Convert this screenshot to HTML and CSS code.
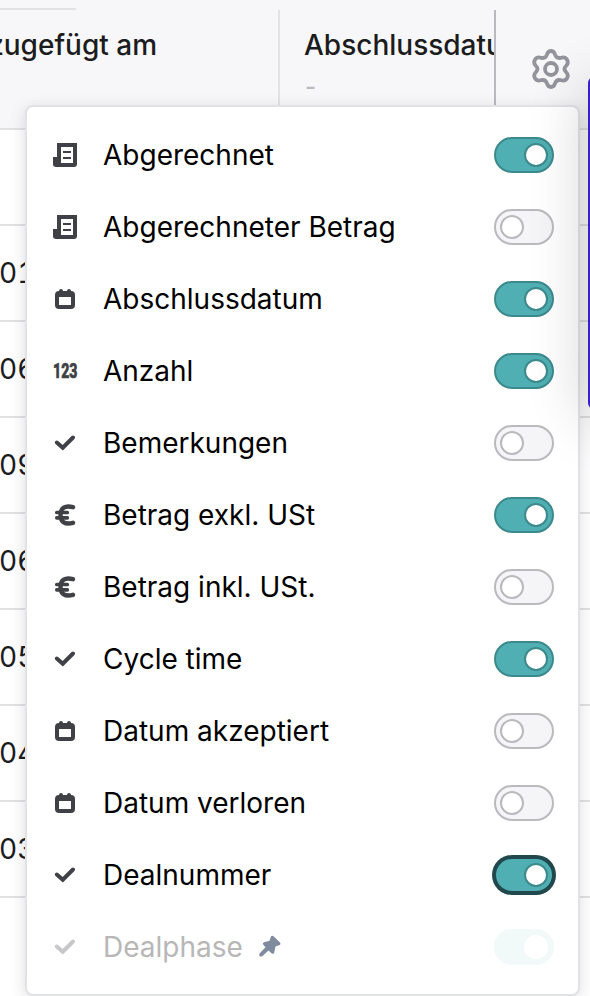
FILE: index.html
```
<!DOCTYPE html>
<html lang="de">
<head>
<meta charset="utf-8">
<title>Spalten</title>
<link rel="stylesheet" href="styles.css">
</head>
<body>
<svg class="defs" aria-hidden="true">
  <symbol id="receipt" viewBox="0 0 24 24"><path fill-rule="evenodd" d="M4 0h20v21q0 3-3 3H3q-3 0-3-3v-7h4zM8 4v16h12V4z"/><path d="M10 8h8v2h-8zM10 14h8v2h-8z"/></symbol>
  <symbol id="calendar" viewBox="0 0 24 24"><path fill-rule="evenodd" d="M6 4q0-2 2-2t2 2h4q0-2 2-2t2 2q4 0 4 4v10q0 4-4 4H6q-4 0-4-4V8q0-4 4-4zM6 10v8h12v-8z"/></symbol>
  <symbol id="check" viewBox="0 0 24 24"><path d="M3.800 11.500l6 5.200L20 6.500" fill="none" stroke="currentColor" stroke-width="4" stroke-linecap="round"/></symbol>
  <symbol id="euro" viewBox="0 0 24 24"><path d="M20 4.200C12 2 7.500 5 7.500 12s4.500 10 12.500 7.800" fill="none" stroke="currentColor" stroke-width="4.400" stroke-linecap="round"/><path d="M3.800 9.500h10.500M3.800 14.800h10.500" fill="none" stroke="currentColor" stroke-width="3.700" stroke-linecap="round"/></symbol>
  <symbol id="pin" viewBox="0 0 24 24"><path d="M13 2.500q1-1.500 2.500-.3l6.500 6.300q1.300 1.500-.3 2.500l-4.200 1.500-1.200 6q-1 2-2.800.7l-3-2.700-6 5.500q-2 1.300-3-.3-.8-1.200.3-2.500l5.700-6-2.200-2.500q-1.200-1.700.7-2.500l5.500-1.500z"/></symbol>
</svg>
<main class="table">
  <div class="head">
    <div class="col added">zugefügt am</div>
    <div class="col closing"><span>Abschlussdatum</span><small>-</small></div>
    <div class="settings"><svg class="gear" viewBox="0 0 40 40"><path d="M16 5.500Q17 2 20 2t4 3.500q1.500 4.500 6 3.300 4-1.300 6 2t-1 6.200q-3 3 0 6 3 2.900 1 6.200t-6 2q-4.500-1.200-6 3.300-1 3.500-4 3.500t-4-3.500q-1.500-4.500-6-3.300-4 1.300-6-2T5 23q3-3 0-6-3-2.900-1-6.200t6-2q4.500 1.200 6-3.300z"/><circle cx="20" cy="20" r="6"/></svg></div>
  </div>
  <div class="row"></div>
  <div class="row">01</div>
  <div class="row">06</div>
  <div class="row">09</div>
  <div class="row">06</div>
  <div class="row">05</div>
  <div class="row">04</div>
  <div class="row">03</div>
</main>
<div class="topline"></div>
<ul class="menu">
  <li><svg><use href="#receipt"/></svg><span>Abgerechnet</span><i class="toggle on"></i></li>
  <li><svg><use href="#receipt"/></svg><span>Abgerechneter Betrag</span><i class="toggle"></i></li>
  <li><svg><use href="#calendar"/></svg><span>Abschlussdatum</span><i class="toggle on"></i></li>
  <li><b class="digits">123</b><span>Anzahl</span><i class="toggle on"></i></li>
  <li><svg><use href="#check"/></svg><span>Bemerkungen</span><i class="toggle"></i></li>
  <li><svg><use href="#euro"/></svg><span>Betrag exkl. USt</span><i class="toggle on"></i></li>
  <li><svg><use href="#euro"/></svg><span>Betrag inkl. USt.</span><i class="toggle"></i></li>
  <li><svg><use href="#check"/></svg><span>Cycle time</span><i class="toggle on"></i></li>
  <li><svg><use href="#calendar"/></svg><span>Datum akzeptiert</span><i class="toggle"></i></li>
  <li><svg><use href="#calendar"/></svg><span>Datum verloren</span><i class="toggle"></i></li>
  <li><svg><use href="#check"/></svg><span>Dealnummer</span><i class="toggle on focus"></i></li>
  <li class="disabled"><svg><use href="#check"/></svg><span>Dealphase</span><svg class="pin"><use href="#pin"/></svg><i class="toggle on"></i></li>
</ul>
<div class="panel"></div>
</body>
</html>
```

FILE: styles.css
```
* { box-sizing: border-box; }
html { overflow: hidden; }
body {
  margin: 0;
  width: 590px;
  height: 996px;
  overflow: hidden;
  position: relative;
  background: #fff;
  color: #1b1c20;
  font: 28px/36px Inter, sans-serif;
}
.defs { position: absolute; width: 0; height: 0; }
.head {
  display: flex;
  height: 130px;
  padding-top: 10px;
  border-bottom: 2px solid #e2e2e4;
  background: #f7f7f9;
  font-weight: 500;
}
.col { padding-top: 17px; white-space: nowrap; overflow: hidden; }
.added {
  width: 280px;
  border-right: 2px solid #e2e2e4;
  display: flex;
  justify-content: flex-end;
  padding-right: 121px;
}
.closing {
  width: 216px;
  padding-left: 24px;
  border-right: 2px solid #b9b9be;
}
.closing span { display: block; }
.closing small { display: block; padding-left: 1px; font-size: 24px; line-height: 47px; color: #b9b9be; font-weight: 500; }
.settings { padding: 39px 0 0 35px; }
.gear {
  display: block;
  width: 40px;
  height: 40px;
  fill: none;
  stroke: #94949c;
  stroke-width: 3.8;
}
.row {
  height: 96px;
  padding-top: 29px;
  border-bottom: 2px solid #e2e2e4;
  font-variant-numeric: tabular-nums;
  text-indent: -1px;
}
.topline { position: absolute; top: 8px; left: 0; width: 76px; height: 2px; background: #e2e2e4; }
.menu {
  position: absolute;
  left: 25px;
  top: 105px;
  width: 555px;
  height: 891px;
  margin: 0;
  padding: 12px 24px 0;
  list-style: none;
  background: #fff;
  border: 2px solid #e1e2e4;
  border-radius: 8px;
  box-shadow: 0 4px 16px rgba(33, 34, 60, .15);
  color: #000;
}
.menu li { display: flex; align-items: center; height: 72px; }
.menu svg, .digits { width: 24px; height: 24px; margin: 0 26px 0 2px; color: #404146; fill: currentColor; }
.digits {
  width: 36px;
  margin-right: 14px;
  font: 900 21px/24px Roboto, sans-serif;
  -webkit-text-stroke: .6px currentColor;
  transform: scaleX(.67);
  transform-origin: left;
}
.toggle {
  position: relative;
  width: 60px;
  height: 36px;
  margin-left: auto;
  border: 2px solid #b9b9be;
  border-radius: 18px;
  background: #f5f5f7;
}
.toggle::after {
  content: "";
  box-sizing: border-box;
  position: absolute;
  left: 4px;
  top: 4px;
  width: 24px;
  height: 24px;
  border: 2px solid #b9b9be;
  border-radius: 50%;
  background: #fff;
}
.toggle.on { background: #50afb2; border-color: #3c898d; }
.toggle.on::after { left: 28px; border-color: #3c898d; }
.toggle.focus { border-color: #20484d; box-shadow: 0 0 0 2px #20484d; }
.disabled span { color: #b7b7b7; }
.menu .disabled svg { color: #c7c7c9; }
.menu .disabled .pin { color: #7f8c9f; margin: 0 0 2px 15px; }
.disabled .toggle.on { background: #f1faf9; border-color: #f1faf9; }
.disabled .toggle.on::after { border-color: #fff; }
.panel {
  position: absolute;
  left: 588px;
  top: 77px;
  width: 300px;
  height: 332px;
  border: 2px solid #3a1fc8;
  border-radius: 6px;
  background: #3a1fc8;
  box-shadow: 0 10px 60px rgba(0, 0, 0, .2);
}
```
